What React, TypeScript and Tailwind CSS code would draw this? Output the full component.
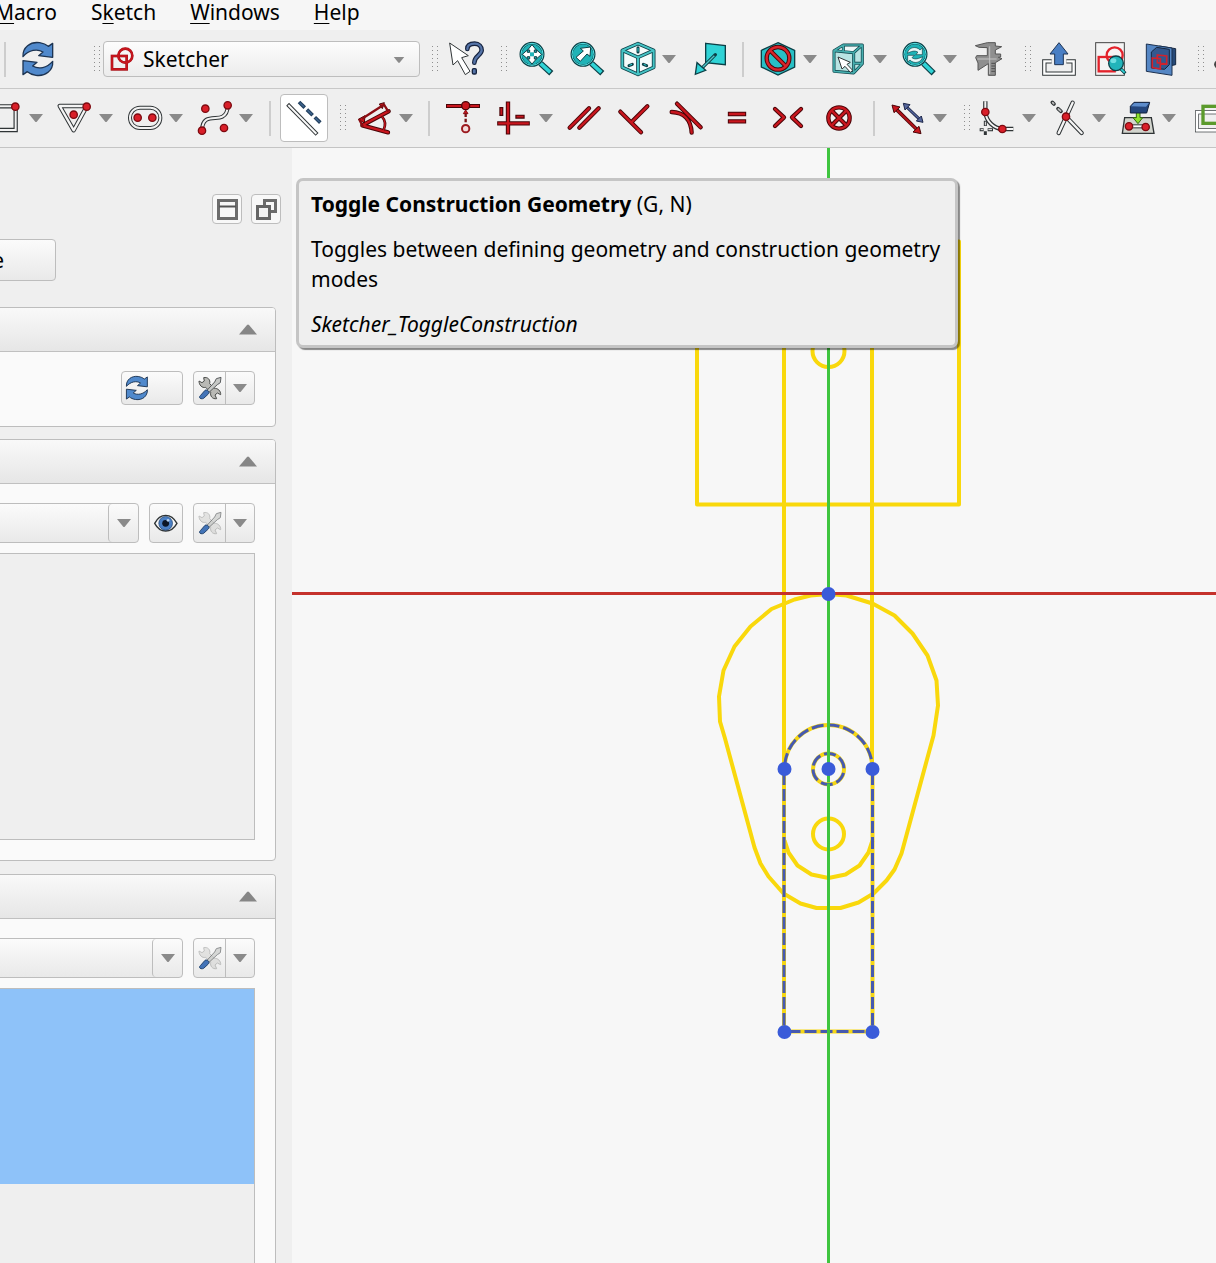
import type { ReactNode } from "react";

const RED = "#c9161e";
const DARK_RED = "#4a0508";
const TEAL = "#2fd3d6";
const DEEP = "#0c3f46";
const INK = "#2f3436";

function Icon({ vb, className = "h-[34px] w-[34px]", children }: { vb: string; className?: string; children: ReactNode }) {
  return (
    <svg viewBox={vb} className={`${className} block shrink-0 overflow-visible`} fill="none" aria-hidden="true">
      {children}
    </svg>
  );
}

function Tube({ d, w = 13, inner = 7, edge = DARK_RED, fill = RED, cap = "round" }: { d: string; w?: number; inner?: number; edge?: string; fill?: string; cap?: "round" | "square" | "butt" }) {
  return (
    <>
      <path d={d} stroke={edge} strokeWidth={w} strokeLinecap={cap} strokeLinejoin="round" />
      <path d={d} stroke={fill} strokeWidth={inner} strokeLinecap={cap} strokeLinejoin="round" />
    </>
  );
}

function Dot({ x, y, r = 11 }: { x: number; y: number; r?: number }) {
  return <circle cx={x} cy={y} r={r} fill="#d91f29" stroke="#7d0a10" strokeWidth="4" />;
}

function Down({ className = "h-2 w-3.5" }: { className?: string }) {
  return (
    <svg viewBox="0 0 14 8" className={`${className} block shrink-0`} aria-hidden="true">
      <path d="M0 0H14L8 7.4Q7 8.4 6 7.4Z" fill="#8a8a8a" />
    </svg>
  );
}

function Up() {
  return (
    <svg viewBox="0 0 18 11" className="block h-[11px] w-[18px]" aria-hidden="true">
      <path d="M0 10.5L8 1Q9 0 10 1L18 10.5Z" fill="#868686" />
    </svg>
  );
}

function Tool({ label, children }: { label: string; children: ReactNode }) {
  return (
    <button type="button" aria-label={label} className="flex h-12 w-[51px] shrink-0 items-center justify-center">
      {children}
    </button>
  );
}

function MenuTool({ label, children, className = "" }: { label: string; children: ReactNode; className?: string }) {
  return (
    <div className={`flex h-12 w-[70px] shrink-0 items-center pl-[9px] ${className}`}>
      <button type="button" aria-label={label}>{children}</button>
      <button type="button" aria-label={`${label} options`} className="ml-[5px] flex h-12 w-[18px] items-center justify-center">
        <Down />
      </button>
    </div>
  );
}

function Sep({ className = "w-5" }: { className?: string }) {
  return (
    <div className={`flex h-[35px] shrink-0 justify-center ${className}`}>
      <div className="w-0.5 bg-[#cdcdcd]" />
    </div>
  );
}

function Grip({ className = "" }: { className?: string }) {
  return (
    <svg viewBox="0 0 12 26" className={`block h-[26px] w-3 shrink-0 ${className}`} fill="#8f8f8f" aria-hidden="true">
      {[0, 1, 2, 3, 4, 5, 6].map((i) => (
        <g key={i}>
          <rect x="3" y={i * 4} width="1" height="1" />
          <rect x="8" y={i * 4} width="1" height="1" />
        </g>
      ))}
    </svg>
  );
}

function Refresh({ className }: { className?: string }) {
  const d = "M70 170C68 142 92 124 120 128C132 130 140 134 146 139L159 130V172L117 167L130 156C112 145 88 150 70 170Z";
  return (
    <Icon vb="64 126 102 102" className={className}>
      <g fill="#5089cc" stroke="#1d3452" strokeWidth="4" strokeLinejoin="round">
        <path d={d} />
        <path d={d} transform="rotate(180 114.5 177)" />
      </g>
    </Icon>
  );
}

function Lens({ x, y, r = 34, hx, hy }: { x: number; y: number; r?: number; hx: number; hy: number }) {
  return (
    <>
      <path d={`M${x + r * 0.75} ${y + r * 0.8}L${hx} ${hy}`} stroke={DEEP} strokeWidth="18" />
      <path d={`M${x + r * 0.75} ${y + r * 0.8}L${hx - 3} ${hy - 3}`} stroke={TEAL} strokeWidth="11" />
      <circle cx={x} cy={y} r={r} fill="#1fb3b7" stroke={DEEP} strokeWidth="7" />
      <circle cx={x} cy={y} r={r - 1} stroke="#58e6e8" strokeWidth="3" />
    </>
  );
}

function ToolsIcon({ faded = false }: { faded?: boolean }) {
  return (
    <Icon vb="591 679 72 72" className="h-6 w-6">
      <g opacity={faded ? 0.3 : 1}>
        <path d="M594 694L603 699L610 694L608 684C620 681 629 690 626 702L640 716C650 715 660 724 659 735L649 730L642 736L647 747C634 749 627 739 629 728L614 713C603 716 594 706 594 694Z" fill="#b9b9b5" stroke="#4a4c4a" strokeWidth="3" />
      </g>
      <g opacity={faded ? 0.65 : 1}>
        <path d="M660 683L658 699L649 705L624 728L618 722L641 697L646 687Z" fill="#c6c8c6" stroke="#5a5d5f" strokeWidth="3" strokeLinejoin="round" />
      </g>
      <path d="M598 738L612 722C618 718 628 727 622 733L608 746C600 750 591 744 598 738Z" fill="#4374b8" stroke="#24456f" strokeWidth="3" />
    </Icon>
  );
}

const panelButton = "border border-[#bdbdbd] bg-linear-to-b from-[#fbfbfb] to-[#e9e9e9]";

function SplitTools({ faded = false, className = "h-10" }: { faded?: boolean; className?: string }) {
  return (
    <div className={`flex w-[62px] shrink-0 rounded-[4px] ${panelButton} ${className}`}>
      <button type="button" aria-label="Settings" className="flex w-8 items-center justify-center border-r border-[#bdbdbd]">
        <ToolsIcon faded={faded} />
      </button>
      <button type="button" aria-label="Settings menu" className="flex flex-1 items-center justify-center">
        <Down />
      </button>
    </div>
  );
}

function Filter({ className, label }: { className: string; label: string }) {
  return (
    <div className={`-ml-1 flex h-10 items-stretch rounded-[4px] ${panelButton} ${className}`}>
      <button type="button" aria-label={label} className="flex-1" />
      <button type="button" aria-label={`${label} menu`} className="flex w-[30px] items-center justify-center rounded-l-[4px] border-l border-[#bdbdbd]">
        <Down />
      </button>
    </div>
  );
}

function Group({ label, className = "", children }: { label: string; className?: string; children: ReactNode }) {
  return (
    <section aria-label={label} className={`mr-4 -ml-1 flex flex-col rounded-[4px] border border-[#bdbdbd] bg-[#fafafa] ${className}`}>
      <button type="button" aria-label={`Collapse ${label}`} className="flex h-11 shrink-0 items-center justify-end rounded-t-[3px] border-b border-[#c0c0c0] bg-linear-to-b from-[#f9f9f9] to-[#e6e6e6] pr-[18px]">
        <Up />
      </button>
      {children}
    </section>
  );
}

function MenuBar() {
  const items: [string, string, string][] = [["", "M", "acro"], ["S", "k", "etch"], ["", "W", "indows"], ["", "H", "elp"]];
  return (
    <nav className="-ml-[5px] flex h-[30px] items-center gap-[34px] bg-[#f6f6f6] pb-[6px] leading-6">
      {items.map(([a, b, c]) => (
        <button type="button" key={b + c} className="whitespace-nowrap">
          {a}
          <span className="underline decoration-1 underline-offset-[3px]">{b}</span>
          {c}
        </button>
      ))}
    </nav>
  );
}

function TopToolbar() {
  return (
    <div role="toolbar" aria-label="View" className="flex h-[59px] items-center overflow-hidden border-b border-[#c8c8c8]">
      <Sep className="w-[9px]" />
      <div className="ml-[3px]"><Tool label="Refresh"><Refresh /></Tool></div>
      <Grip className="ml-7" />
      <div className="relative h-9 w-[317px] shrink-0">
        <select aria-label="Workbench" defaultValue="Sketcher" className="h-full w-full appearance-none rounded-[4px] border border-[#bdbdbd] bg-linear-to-b from-[#fdfdfd] to-[#ececec] pt-0.5 pl-[39px]">
          <option>Sketcher</option>
        </select>
        <div className="pointer-events-none absolute top-1.5 left-[7px]">
          <Icon vb="330 141 72 72" className="h-6 w-6">
            <g stroke="#a31218" strokeWidth="8"><rect x="336" y="168" width="44" height="40" /><circle cx="376" cy="167" r="21" /></g>
            <g stroke={RED} strokeWidth="5"><rect x="336" y="168" width="44" height="40" /><circle cx="376" cy="167" r="21" /></g>
          </Icon>
        </div>
        <div className="pointer-events-none absolute top-4 right-[15px]"><Down className="h-[6px] w-3" /></div>
      </div>
      <Grip className="ml-[9px]" />
      <Tool label="What's this">
        <Icon vb="89 36 102 102">
          <path d="M88 39L144 77L124 83L149 124L135 134L112 92L98 105Z" fill="#fff" stroke={INK} strokeWidth="3" strokeLinejoin="round" />
          <path d="M141 57C141 43 152 41 163 41C176 41 184 50 184 61C184 75 162 78 162 98" stroke="#16233f" strokeWidth="14" strokeLinecap="round" />
          <path d="M141 57C141 43 152 41 163 41C176 41 184 50 184 61C184 75 162 78 162 98" stroke="#5574a8" strokeWidth="7" strokeLinecap="round" />
          <rect x="156" y="116" width="12" height="16" rx="4" fill="#5574a8" stroke="#16233f" strokeWidth="4" />
        </Icon>
      </Tool>
      <Grip className="ml-[6px]" />
      <Tool label="Fit all">
        <Icon vb="295 36 102 102">
          <Lens x={334} y={73} hx={392} hy={130} />
          <path d="M334 44L347 60H341V67H348V60L363 73L348 86V80H341V87H347L334 102L321 87H327V80H320V86L305 73L320 60V67H327V60H321Z" fill="#fff" stroke={DEEP} strokeWidth="3" />
          <rect x="328" y="67" width="12" height="12" fill="#1fb3b7" />
        </Icon>
      </Tool>
      <Tool label="Fit selection">
        <Icon vb="448 36 102 102">
          <Lens x={487} y={73} hx={545} hy={130} />
          <path d="M510 51L508 79L499 72L479 94L466 82L488 63L479 55Z" fill="#fff" stroke={DEEP} strokeWidth="3" />
        </Icon>
      </Tool>
      <MenuTool label="Isometric">
        <Icon vb="603 36 102 102">
          <path d="M654 41L701 61V112L654 133L607 112V61Z" fill="#f4fbfb" stroke={DEEP} strokeWidth="11" strokeLinejoin="round" />
          <path d="M607 61L654 82L701 61M654 82V133" stroke={DEEP} strokeWidth="11" />
          <path d="M654 41L701 61V112L654 133L607 112V61ZM607 61L654 82L701 61M654 82V133" stroke="#45c3c5" strokeWidth="6" />
          <path d="M654 53V66M627 107L637 103M670 103L680 107" stroke={DEEP} strokeWidth="9" strokeLinecap="round" />
          <path d="M654 54V65M628 106L636 103M671 103L679 106" stroke={TEAL} strokeWidth="3" />
        </Icon>
      </MenuTool>
      <Tool label="Align to selection">
        <Icon vb="811 36 102 102">
          <path d="M855 40L914 47V104L855 98Z" fill={TEAL} stroke={DEEP} strokeWidth="4" />
          <path d="M884 74L846 112" stroke={DEEP} strokeWidth="10" strokeLinecap="round" />
          <path d="M881 77L846 112" stroke="#4fc6c9" strokeWidth="4" />
          <path d="M824 133L829 98L855 121Z" fill={TEAL} stroke={DEEP} strokeWidth="4" />
        </Icon>
      </Tool>
      <Sep />
      <MenuTool label="Draw style">
        <Icon vb="1026 36 102 102">
          <path d="M1074 38L1124 61V111L1074 135L1024 111V61Z" fill="#28bfc5" stroke={DEEP} strokeWidth="4" />
          <circle cx="1074" cy="85" r="34" stroke={DARK_RED} strokeWidth="13" />
          <path d="M1051 62L1097 108" stroke={DARK_RED} strokeWidth="13" />
          <circle cx="1074" cy="85" r="34" stroke="#d9242b" strokeWidth="7" />
          <path d="M1050 61L1098 109" stroke="#d9242b" strokeWidth="7" />
        </Icon>
      </MenuTool>
      <MenuTool label="Bounding box">
        <Icon vb="48 36 102 102">
          <path d="M54 62L82 45H139V101L113 129L54 124Z" fill="#b9e4e3" />
          <path d="M54 62L82 45H139L113 68Z" fill="#eef8f8" />
          <g stroke={DEEP} strokeWidth="9" strokeLinejoin="round"><path d="M54 62L82 45H139V101L113 129L54 124ZM54 62L113 68L139 45M113 68V129M82 45V66M113 100H139" /></g>
          <g stroke="#46aeae" strokeWidth="5" strokeLinejoin="round"><path d="M54 62L82 45H139V101L113 129L54 124ZM54 62L113 68L139 45M113 68V129M82 45V66M113 100H139" /></g>
          <path d="M66 81L103 97L93 103L110 121L103 127L87 109L78 117Z" fill="#fff" stroke={INK} strokeWidth="3" />
        </Icon>
      </MenuTool>
      <MenuTool label="Synchronize view">
        <Icon vb="258 36 102 102">
          <Lens x={297} y={73} hx={353} hy={130} />
          <path d="M274 70C278 50 302 48 312 60L319 54V74H299L306 67C297 60 286 64 274 70Z" fill="#e8f8f8" stroke={DEEP} strokeWidth="2" />
          <path d="M274 70C278 50 302 48 312 60L319 54V74H299L306 67C297 60 286 64 274 70Z" fill="#e8f8f8" stroke={DEEP} strokeWidth="2" transform="rotate(180 297 75)" />
        </Icon>
      </MenuTool>
      <Tool label="Measure">
        <Icon vb="466 36 102 102">
          <path d="M476 47L512 38H536V48L555 50L536 60V72H552V81L545 82L556 86L536 98V136H515V101L484 121V99L477 83L480 77H512V53L487 52Z" fill="#8f8f8f" stroke="#555" strokeWidth="3" strokeLinejoin="round" />
          <path d="M519 49V132M482 87H540" stroke="#c4c4c4" strokeWidth="3" />
          <path d="M524 100H535M524 108H535M524 116H535M524 124H535" stroke="#4e4e4e" strokeWidth="3" />
        </Icon>
      </Tool>
      <Grip className="ml-2" />
      <Tool label="Leave sketch">
        <Icon vb="681 36 102 102">
          <path d="M707 94H685V131H773V94H751" stroke={INK} strokeWidth="13" />
          <path d="M707 94H685V131H773V94H751" stroke="#fff" strokeWidth="7" />
          <path d="M729 38L756 72H742V104H716V72H702Z" fill="#4a7fc4" stroke="#1e3455" strokeWidth="3" />
        </Icon>
      </Tool>
      <Tool label="View sketch">
        <Icon vb="834 36 102 102">
          <rect x="839" y="38" width="86" height="98" fill="#f4f4f4" stroke="#444" strokeWidth="3" />
          <rect x="848" y="81" width="48" height="43" stroke="#e3222b" strokeWidth="7" />
          <circle cx="896" cy="76" r="24" stroke="#e3222b" strokeWidth="7" />
          <path d="M913 115L928 130" stroke={DEEP} strokeWidth="10" />
          <path d="M913 115L926 128" stroke={TEAL} strokeWidth="5" />
          <circle cx="900" cy="100" r="22" fill="#22b4ba" stroke={DEEP} strokeWidth="4" />
          <ellipse cx="892" cy="92" rx="9" ry="7" fill="#6fdfe2" />
        </Icon>
      </Tool>
      <Tool label="View section">
        <Icon vb="987 36 102 102">
          <path d="M1030 48L1079 56V104L1040 112Z" fill="#274a78" stroke="#152740" strokeWidth="3" />
          <path d="M991 42L1068 54V136L991 124Z" fill="#5486c4" stroke="#1b304f" strokeWidth="3" />
          <path d="M1006 66L1022 52L1060 58V104L1046 118L1006 114Z" fill="#33588f" stroke="#152740" strokeWidth="3" />
          <path d="M1009 84L1033 86V117L1009 113ZM1024 75L1052 78V102L1024 98Z" stroke="#d0222d" strokeWidth="5" />
        </Icon>
      </Tool>
      <Grip className="ml-2" />
      <Icon vb="1173 36 102 102">
        <path d="M1212 92C1203 92 1198 96 1197 103C1197 110 1206 118 1215 118" stroke="#444" strokeWidth="6" />
      </Icon>
    </div>
  );
}

function SketchToolbar() {
  return (
    <div role="toolbar" aria-label="Sketcher" className="flex h-[59px] items-center overflow-hidden border-b border-[#c4c4c4]">
      <MenuTool label="Rectangle" className="-ml-[21px]">
        <Icon vb="-36 303 102 102">
          <path d="M-30 319H47V390H-30Z" stroke={INK} strokeWidth="13" />
          <path d="M-30 319H47V390H-30Z" stroke="#f2f2f2" strokeWidth="6" />
          <Dot x={46} y={320} />
        </Icon>
      </MenuTool>
      <MenuTool label="Polygon">
        <Icon vb="174 303 102 102">
          <path d="M179 318H261L221 391Z" stroke={INK} strokeWidth="13" strokeLinejoin="round" />
          <path d="M179 318H261L221 391Z" stroke="#f4f4f4" strokeWidth="7" strokeLinejoin="round" />
          <Dot x={221} y={344} /><Dot x={260} y={320} />
        </Icon>
      </MenuTool>
      <MenuTool label="Slot">
        <Icon vb="384 303 102 102">
          <rect x="390" y="323" width="91" height="61" rx="30" stroke={INK} strokeWidth="12" />
          <rect x="390" y="323" width="91" height="61" rx="30" stroke="#f2f2f2" strokeWidth="6" />
          <Dot x={413} y={353} /><Dot x={457} y={353} />
        </Icon>
      </MenuTool>
      <MenuTool label="B-spline">
        <Icon vb="594 303 102 102">
          <Tube d="M606 392C606 340 648 360 667 350C682 342 683 330 683 318" edge={INK} fill="#f2f2f2" w={12} inner={6} />
          <Dot x={616} y={326} /><Dot x={683} y={316} /><Dot x={606} y={392} /><Dot x={672} y={384} />
        </Icon>
      </MenuTool>
      <Sep className="w-[21px]" />
      <button type="button" aria-label="Toggle construction geometry" className="flex h-12 w-12 shrink-0 items-center justify-center rounded-[4px] border border-[#bdbdbd] bg-white">
        <Icon vb="861 303 102 102">
          <Tube d="M867 317L947 399" edge={INK} fill="#fafafa" w={12} inner={6} cap="square" />
          <path d="M897 306L961 368" stroke="#24405f" strokeWidth="11" strokeDasharray="24 9" />
          <path d="M899 308L961 368" stroke="#3f6690" strokeWidth="4" strokeDasharray="18 15" />
        </Icon>
      </button>
      <Grip className="ml-[9px]" />
      <MenuTool label="Dimension">
        <Icon vb="1074 303 102 102">
          <Tube d="M1087 376L1166 334M1087 376L1164 397" w={13} inner={7} />
          <path d="M1075 358L1095 347L1093 369Z M1153 308L1147 326L1138 312Z" fill={RED} stroke={DARK_RED} strokeWidth="3" />
          <path d="M1086 356L1149 316M1077 357L1089 380M1151 312L1165 335" stroke="#8b0d13" strokeWidth="7" />
          <path d="M1146 350C1156 361 1157 376 1151 390" stroke={DARK_RED} strokeWidth="8" />
          <path d="M1146 350C1156 361 1157 376 1151 390" stroke={RED} strokeWidth="4" />
        </Icon>
      </MenuTool>
      <Sep className="w-[19px]" />
      <Tool label="Coincident">
        <Icon vb="81 213 102 102">
          <Tube d="M84 228H174" cap="square" w={12} inner={6} />
          <circle cx="137" cy="227" r="12" fill={RED} stroke={DARK_RED} strokeWidth="4" />
          <path d="M137 240L144 251H130Z" fill={RED} stroke="#8b0d13" strokeWidth="3" />
          <path d="M137 250V279" stroke="#7a1216" strokeWidth="7" strokeDasharray="11 5" />
          <circle cx="137" cy="296" r="11" fill="#f3dcdc" stroke="#9c1b20" strokeWidth="6" />
        </Icon>
      </Tool>
      <MenuTool label="Horizontal or vertical">
        <Icon vb="236 213 102 102">
          <Tube d="M240 280H325M266 221V307" cap="square" w={13} inner={7} />
          <Tube d="M246 237V252M294 260H310" cap="square" w={12} inner={5} />
        </Icon>
      </MenuTool>
      <Tool label="Parallel">
        <Icon vb="444 213 102 102"><Tube d="M449 293L507 235M478 293L536 235" /></Icon>
      </Tool>
      <Tool label="Perpendicular">
        <Icon vb="597 213 102 102"><Tube d="M601 245L663 307M637 274L682 229" /></Icon>
      </Tool>
      <Tool label="Tangent">
        <Icon vb="750 213 102 102"><Tube d="M755 246C792 247 813 270 815 308M771 221L842 292" /></Icon>
      </Tool>
      <Tool label="Equal">
        <Icon vb="903 213 102 102"><Tube d="M930 252H972M930 274H972" cap="square" w={13} inner={7} /></Icon>
      </Tool>
      <Tool label="Symmetric">
        <Icon vb="1056 213 102 102"><Tube d="M1065 237L1092 262L1065 288M1143 237L1116 262L1143 288" /></Icon>
      </Tool>
      <Tool label="Block">
        <Icon vb="21 213 102 102">
          <circle cx="69" cy="264" r="32" stroke={DARK_RED} strokeWidth="13" />
          <path d="M51 246L87 282M87 246L51 282" stroke={DARK_RED} strokeWidth="13" />
          <circle cx="69" cy="264" r="32" stroke={RED} strokeWidth="7" />
          <path d="M48 243L90 285M90 243L48 285" stroke={RED} strokeWidth="7" />
        </Icon>
      </Tool>
      <Sep className="w-[18px]" />
      <MenuTool label="Toggle driving constraint">
        <Icon vb="228 213 102 102">
          <path d="M242 239L301 297" stroke={DARK_RED} strokeWidth="11" /><path d="M242 239L301 297" stroke="#b3131a" strokeWidth="6" />
          <path d="M228 225L252 231L234 248ZM315 311L291 306L309 289Z" fill={RED} stroke={DARK_RED} strokeWidth="3" />
          <path d="M272 231L311 268" stroke="#1b2548" strokeWidth="9" /><path d="M272 231L311 268" stroke="#56679e" strokeWidth="4" />
          <path d="M262 220L282 224L267 240ZM321 277L301 273L316 258Z" fill="#56679e" stroke="#1b2548" strokeWidth="3" />
        </Icon>
      </MenuTool>
      <Grip className="ml-2" />
      <MenuTool label="Fillet" className="-ml-px">
        <Icon vb="496 213 102 102">
          <Tube d="M509 214V246C512 275 535 295 560 297H593" edge={INK} fill="#f6f6f6" w={13} inner={6} cap="butt" />
          <path d="M509 272V288M509 304V315M492 299H504M516 299H532" stroke={INK} strokeWidth="9" />
          <path d="M509 275V286M495 299H503M518 299H529" stroke="#f6f6f6" strokeWidth="3" />
          <Dot x={509} y={246} /><Dot x={560} y={297} />
        </Icon>
      </MenuTool>
      <MenuTool label="Trim">
        <Icon vb="705 213 102 102">
          <Tube d="M770 218L728 309M750 260L797 309" edge={INK} fill="#f4f4f4" w={13} inner={7} />
          <path d="M709 217L714 222M726 236L735 244" stroke={INK} strokeWidth="11" strokeLinecap="round" />
          <path d="M710 218L713 221M727 237L734 243" stroke="#bbb" strokeWidth="5" strokeLinecap="round" />
          <Dot x={750} y={260} />
        </Icon>
      </MenuTool>
      <MenuTool label="External geometry">
        <Icon vb="915 213 102 102">
          <path d="M926 263H1006L1014 310H919Z" fill="#d2d4cd" stroke={INK} strokeWidth="4" />
          <path d="M939 289H989" stroke={INK} strokeWidth="12" /><path d="M939 289H989" stroke="#fff" strokeWidth="6" />
          <Dot x={939} y={289} /><Dot x={989} y={291} />
          <path d="M961 243H972V263H980L966 281L951 263H961Z" fill="#8ee02e" stroke="#2f6b0c" strokeWidth="3" />
          <path d="M943 229L954 217H1001L992 249H943Z" fill="#23457c" stroke="#10203b" strokeWidth="3" />
          <path d="M945 229L955 219H999L990 230Z" fill="#5d8ccb" />
        </Icon>
      </MenuTool>
      <MenuTool label="Carbon copy">
        <Icon vb="1125 213 102 102">
          <rect x="1143" y="247" width="80" height="54" stroke={INK} strokeWidth="12" />
          <rect x="1143" y="247" width="80" height="54" stroke="#fff" strokeWidth="8" />
          <rect x="1161" y="229" width="70" height="51" stroke="#5b9a2c" strokeWidth="10" />
        </Icon>
      </MenuTool>
    </div>
  );
}

function TaskPanel() {
  return (
    <aside className="flex w-[292px] shrink-0 flex-col overflow-hidden bg-[#efefef] pt-[46px]">
      <div className="mr-[11px] flex justify-end gap-[9px]">
        <button type="button" aria-label="Dock" className="flex h-[30px] w-[30px] items-center justify-center rounded-[4px] border border-[#bdbdbd] bg-[#f8f8f8]">
          <svg viewBox="0 0 21 21" className="h-[21px] w-[21px]" fill="none" aria-hidden="true">
            <rect x="1.5" y="1.5" width="18" height="18" stroke="#6c6c6c" strokeWidth="3" />
            <path d="M2 7.5H19" stroke="#555" strokeWidth="2" />
          </svg>
        </button>
        <button type="button" aria-label="Float" className="flex h-[30px] w-[30px] items-center justify-center rounded-[4px] border border-[#bdbdbd] bg-[#f8f8f8]">
          <svg viewBox="0 0 21 21" className="h-[21px] w-[21px]" fill="none" aria-hidden="true">
            <rect x="8.5" y="1.5" width="11" height="11" stroke="#6c6c6c" strokeWidth="3" />
            <rect x="1.5" y="7.5" width="12" height="12" fill="#f3f3f3" stroke="#666" strokeWidth="3" />
          </svg>
        </button>
      </div>
      <button type="button" className={`mt-[15px] -ml-[100px] flex h-[42px] w-[156px] items-center justify-end rounded-[4px] pt-0.5 pr-[51px] ${panelButton}`}>Close</button>

      <Group label="Messages" className="mt-[26px] h-[120px]">
        <div className="mt-[19px] mr-5 flex justify-end gap-2.5">
          <button type="button" aria-label="Update" className={`flex h-[34px] w-[62px] items-center rounded-[4px] pl-[3px] ${panelButton}`}>
            <Refresh className="h-6 w-6" />
          </button>
          <SplitTools className="h-[34px]" />
        </div>
      </Group>

      <Group label="Constraints" className="mt-3 h-[422px]">
        <div className="mt-[19px] mr-5 flex gap-2.5">
          <Filter label="Filter constraints" className="flex-1" />
          <button type="button" aria-label="Show all" className={`flex h-10 w-[34px] shrink-0 items-center justify-center rounded-[4px] ${panelButton}`}>
            <Icon vb="464 243 70 70" className="h-6 w-6">
              <path d="M466 279C482 248 514 248 531 279C514 309 482 309 466 279Z" fill="#f6f6f6" stroke={INK} strokeWidth="4" />
              <circle cx="498" cy="279" r="20" fill="#4a7fc4" stroke="#1f406c" strokeWidth="2" />
              <circle cx="498" cy="279" r="10" fill="#0c1626" /><circle cx="505" cy="270" r="4" fill="#b8d2f0" />
            </Icon>
          </button>
          <SplitTools faded />
        </div>
        <div className="mt-2.5 mr-5 mb-5 flex-1 border border-[#bdbdbd] bg-[#efefef]" />
      </Group>

      <Group label="Elements" className="mt-[13px] flex-1 rounded-b-none border-b-0">
        <div className="mt-[19px] mr-5 flex gap-2.5">
          <Filter label="Filter elements" className="flex-1" />
          <SplitTools faded />
        </div>
        <div className="mt-2.5 mr-5 flex-1 border border-b-0 border-[#bdbdbd] bg-[#efefef]">
          <div className="h-[195px] bg-[#8ec2f9]" />
        </div>
      </Group>
    </aside>
  );
}

const outline =
  "0,0.5 -18,2 -34,6 -57,15.5 -78,33 -94,53 -105,77 -109.5,103 -108.5,128 -103.5,145 -74,254 -68,270 -60,283 -45,300 -28,310 -12,314.5 12,314.5 30,309 45,300 58,287 66,276 73,260 105,142 109.5,112 108,87 99,62 84,40 66,22 44,10 18,2";

const points: [number, number][] = [[0, 0.5], [0, 175.5], [-44, 175.5], [44, 175.5], [-44, 438.5], [44, 438.5]];

function Viewport() {
  return (
    <main className="relative min-w-0 flex-1 overflow-hidden bg-[#f7f7f7]">
      <svg className="absolute inset-0 h-full w-full" fill="none" aria-label="Sketch">
        <g transform="translate(536.5 445.5)">
          <g stroke="#f9d80c" strokeWidth="4" strokeLinejoin="round">
            <path d="M-131.500 -352V-89H130.500V-352Z" />
            <path d="M-44.500 -352V176M43.500 -352V176" />
            <circle cx="0" cy="-242.500" r="16" />
            <circle cx="0" cy="240.500" r="15.500" />
            <path d="M-44 247L-40 259L-31 272L-17 281L0 284.500L17 281L31 272L40 259L44 247" />
            <polygon points={outline} />
          </g>
          <path d="M0 -446V2000" stroke="#3fc53f" strokeWidth="3" />
          <path d="M-540 0H2000" stroke="#c5322c" strokeWidth="3" />
          <g stroke="#f5d614" strokeWidth="4">
            <path d="M-44.500 175.500V438.500M44 175.500V438.500M-44 438H44" />
            <path d="M-44 175.500A44 44 0 0 1 44 175.500" />
            <circle cx="0" cy="175.500" r="15.500" />
          </g>
          <g stroke="#4659b0" strokeWidth="3" strokeDasharray="12 4" strokeDashoffset="12">
            <path d="M-44.500 175.500V438.500" />
            <path d="M44 175.500V438.500" />
            <path d="M-44 438H44" />
            <path d="M-44 175.500A44 44 0 0 1 44 175.500" />
            <circle cx="0" cy="175.500" r="15.500" />
          </g>
          <path d="M0 120V180M0 190V250M0 270V450" stroke="#3fc53f" strokeWidth="3" />
          {points.map(([x, y]) => (
            <circle key={`${x},${y}`} cx={x} cy={y} r="7" fill="#3a5bd9" />
          ))}
        </g>
      </svg>
      <div role="tooltip" className="absolute top-[30px] left-[4px] w-[662px] rounded-[7px] border-3 border-[#c5c5c5] bg-[#efefef] px-3 pt-2 pb-1.5 leading-[30px] shadow-[2px_2px_1px_rgba(0,0,0,0.45)]">
        <p><b>Toggle Construction Geometry</b> (G, N)</p>
        <p className="mt-[15px]">Toggles between defining geometry and construction geometry modes</p>
        <p className="mt-[15px] italic">Sketcher_ToggleConstruction</p>
      </div>
    </main>
  );
}

export default function App() {
  return (
    <div className="flex min-h-screen flex-col overflow-hidden bg-[#efefef] font-['Noto_Sans','Open_Sans',sans-serif] text-[21px] text-black">
      <MenuBar />
      <TopToolbar />
      <SketchToolbar />
      <div className="flex flex-1">
        <TaskPanel />
        <Viewport />
      </div>
    </div>
  );
}
